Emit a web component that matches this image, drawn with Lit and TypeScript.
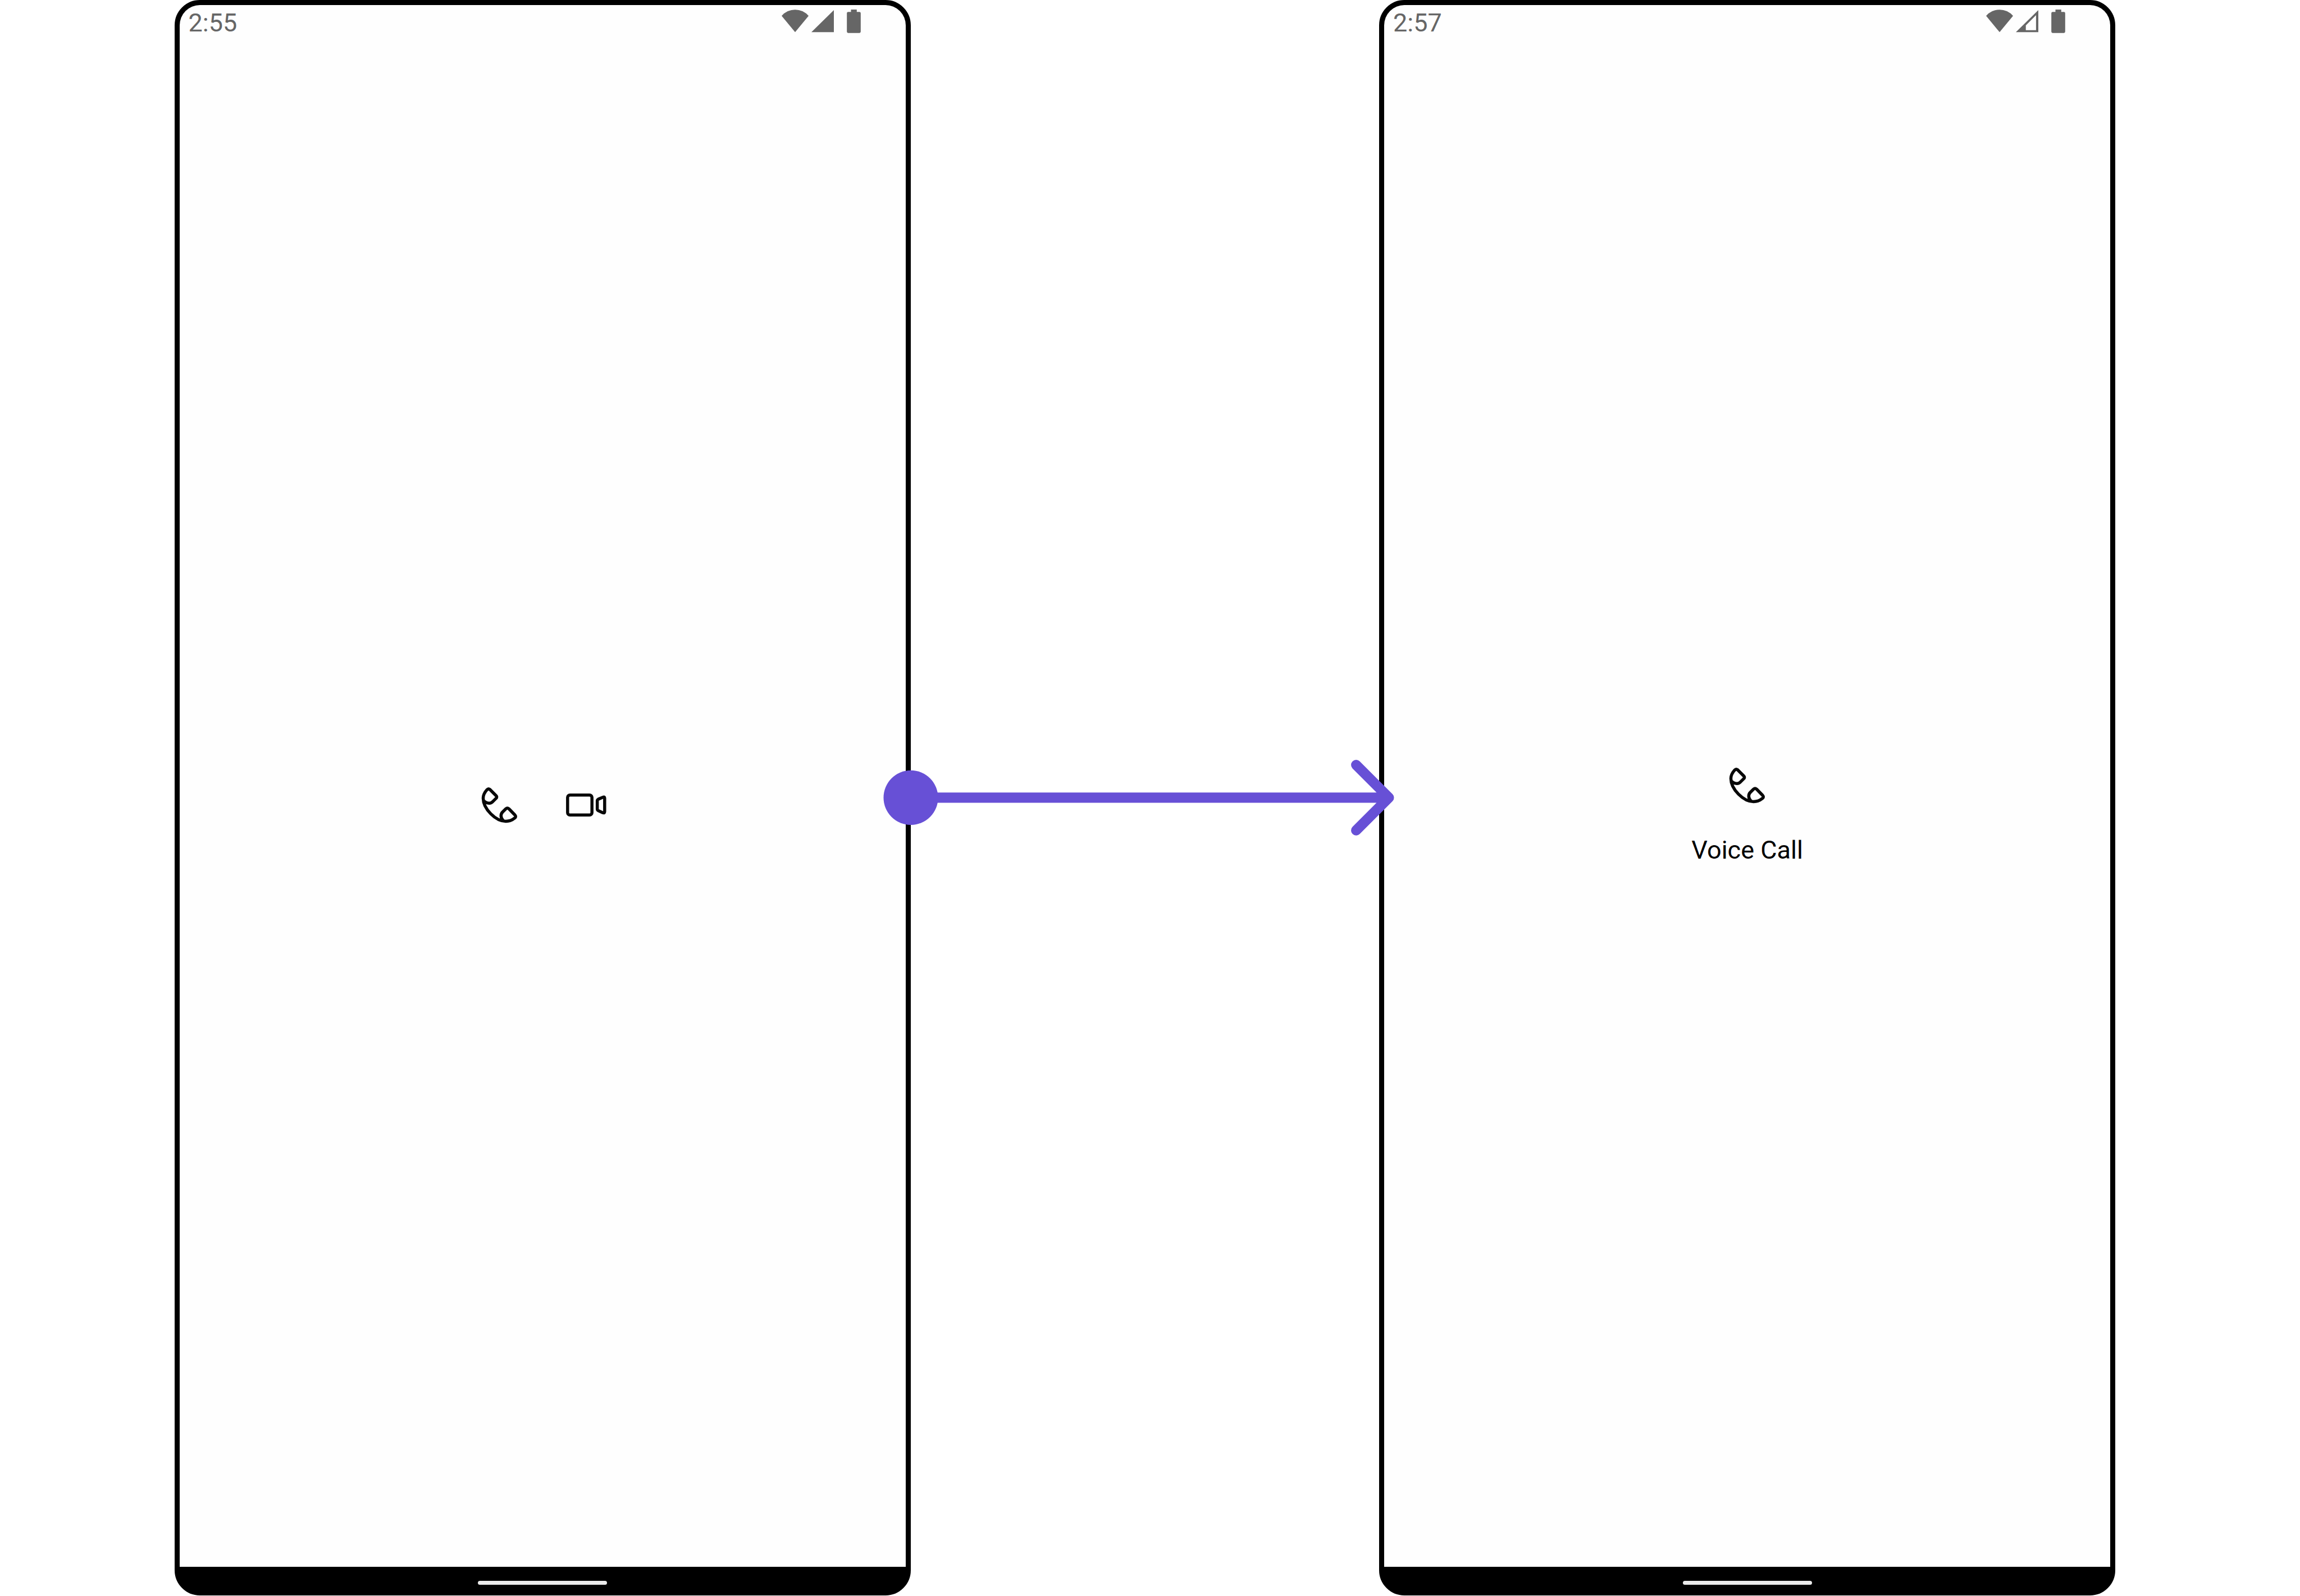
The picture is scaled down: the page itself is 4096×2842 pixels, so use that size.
import { LitElement, html, css, svg } from "lit";
import { customElement, property } from "lit/decorators.js";

const phoneIcon = html`<svg class="icon" viewBox="45 36 252 252" aria-hidden="true">
  <path
    d="M98 73Q106 64 115 71L151 107Q159 115 151 123L132 142Q123 152 110 151Q92 151 80 138M98 73Q76 98 76 122C76 185 150 257 208 257Q237 257 260 238Q270 230 261 220L226 184Q217 176 208 184L189 203Q180 212 180 225Q181 242 193 253"
  />
</svg>`;

const videoIcon = html`<svg class="icon" viewBox="552 36 252 252" aria-hidden="true">
  <rect x="571" y="104" width="142" height="116" rx="14" />
  <path d="M744 137Q744 131 750 128L776 117Q787 112 787 122V200Q787 211 776 207L750 195Q744 192 744 186Z" />
</svg>`;

const signalFull = svg`<path d="M0 44.3L44 1V44.3Z" />`;
const signalWeak = svg`<path fill-rule="evenodd" d="M0 44.3L44 1V44.3ZM19.5 31V40.3H39.5V11Z" />`;

/** Phone frame with a status bar, a centred content area and a gesture bar. */
@customElement("phone-frame")
export class PhoneFrame extends LitElement {
  @property() time = "";
  @property() signal: "full" | "weak" = "full";

  static styles = css`
    :host {
      display: flex;
      flex-direction: column;
      box-sizing: border-box;
      border: 9px solid #000;
      border-radius: 45px;
      background: #000;
      overflow: hidden;
    }
    .status {
      display: flex;
      align-items: flex-start;
      justify-content: space-between;
      box-sizing: border-box;
      height: 68px;
      padding: 5px 80px 0 16px;
      background: #fefefe;
      color: #666;
      fill: #666;
    }
    .time {
      font-size: 45px;
      line-height: 53px;
    }
    .signals {
      display: flex;
      padding-top: 3px;
    }
    .signals svg {
      display: block;
      height: 42px;
    }
    .wifi {
      width: 48px;
      margin-right: 5px;
    }
    .cell {
      width: 40px;
      margin-right: 23px;
    }
    .battery {
      width: 25px;
    }
    .content {
      flex: 1;
      display: flex;
      align-items: center;
      justify-content: center;
      background: #fefefe;
    }
    .gesture {
      display: flex;
      justify-content: center;
      box-sizing: border-box;
      height: 42px;
      padding-top: 25px;
    }
    .pill {
      width: 230px;
      height: 7px;
      border-radius: 4px;
      background: #eaeaea;
    }
  `;

  render() {
    return html`
      <header class="status">
        <time class="time">${this.time}</time>
        <div class="signals">
          <svg class="wifi" viewBox="0 0 53 46" aria-hidden="true">
            <path d="M0 12.3A34.7 34.7 0 0 1 53 12.3L26.5 44.3Z" />
          </svg>
          <svg class="cell" viewBox="0 0 44 46" aria-hidden="true">
            ${this.signal === "full" ? signalFull : signalWeak}
          </svg>
          <svg class="battery" viewBox="0 0 27 46" aria-hidden="true">
            <path d="M8 0H19.3V4.7H24.5Q27 4.7 27 7.2V43Q27 45.7 24.5 45.7H2.5Q0 45.7 0 43V7.2Q0 4.7 2.5 4.7H8Z" />
          </svg>
        </div>
      </header>
      <main class="content"><slot></slot></main>
      <footer class="gesture"><div class="pill"></div></footer>
    `;
  }
}

@customElement("app-root")
export class AppRoot extends LitElement {
  static styles = css`
    :host {
      display: block;
      background: #fff;
      font-family: Roboto, "Liberation Sans", sans-serif;
    }
    .flow {
      display: grid;
      grid-template-columns: 341fr 1440fr 916fr 1440fr 361fr;
      box-sizing: border-box;
      min-height: 100vh;
      padding-bottom: 1px;
    }
    .first {
      grid-column: 2;
    }
    .connector {
      grid-column: 3;
      align-self: center;
      position: relative;
      z-index: 1;
      display: block;
      width: 100%;
      overflow: visible;
      fill: none;
      stroke: #6750d6;
      stroke-width: 20;
      stroke-linecap: round;
      stroke-linejoin: round;
    }
    .dot {
      fill: #6750d6;
      stroke: none;
    }
    .second {
      grid-column: 4;
    }
    .call {
      display: flex;
      flex-direction: column;
      align-items: center;
      gap: 7px;
      margin: 0;
      padding: 0;
      border: 0;
      background: none;
      color: #000;
      font: inherit;
    }
    .target {
      display: flex;
      align-items: center;
      justify-content: center;
      width: 154px;
      height: 154px;
    }
    .icon {
      display: block;
      width: 77px;
      height: 77px;
      fill: none;
      stroke: #080808;
      stroke-width: 18;
      stroke-linecap: round;
      stroke-linejoin: round;
    }
    .label {
      font-size: 45px;
      line-height: 64px;
    }
  `;

  render() {
    return html`
      <div class="flow">
        <phone-frame class="first" time="2:55" signal="full">
          <button class="call" type="button" aria-label="Voice call">
            <span class="target">${phoneIcon}</span>
          </button>
          <button class="call" type="button" aria-label="Video call">
            <span class="target">${videoIcon}</span>
          </button>
        </phone-frame>
        <svg class="connector" viewBox="0 0 916 148" aria-hidden="true">
          <path d="M0 74H935M871 10L935 74L871 138" />
          <circle class="dot" cx="0" cy="74" r="53.3" />
        </svg>
        <phone-frame class="second" time="2:57" signal="weak">
          <button class="call" type="button">
            <span class="target">${phoneIcon}</span>
            <span class="label">Voice Call</span>
          </button>
        </phone-frame>
      </div>
    `;
  }
}
